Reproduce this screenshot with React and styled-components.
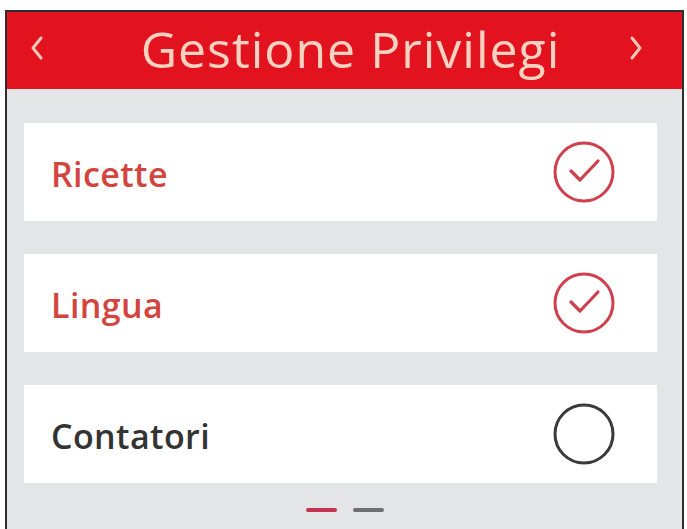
import styled, { createGlobalStyle } from 'styled-components'

const GlobalStyle = createGlobalStyle`
  html, body {
    margin: 0;
    padding: 0;
    background: #ffffff;
    overflow: hidden;
  }
  body {
    font-family: "Open Sans", "DejaVu Sans", sans-serif;
  }
`;

const Page = styled.div`
  width: 687px;
  height: 529px;
  padding: 10px 3px 0 5px;
  box-sizing: border-box;
  overflow: hidden;
`;

const Screen = styled.div`
  border: 2px solid #2e2e2e;
  border-bottom: 0;
  height: 540px;
  background: #e4e5e7;
  display: flex;
  flex-direction: column;
`;

const Header = styled.div`
  height: 77px;
  background: #e2121f;
  display: flex;
  align-items: center;
  justify-content: space-between;
  padding: 0 38px 0 22px;
`;

const Title = styled.h1`
  margin: 0;
  font-size: 50px;
  font-weight: 400;
  letter-spacing: 1px;
  color: #f7d2c0;
  line-height: 1;
  padding: 0 0 4px 28px;
`;

const Chevron = styled.span`
  display: flex;
  width: 16px;
  justify-content: center;
  margin-top: -6px;
`;

const List = styled.div`
  display: flex;
  flex-direction: column;
  gap: 33px;
  padding: 34px 25px 0 17px;
`;

const Row = styled.div`
  height: 98px;
  background: #ffffff;
  display: flex;
  align-items: center;
  justify-content: space-between;
  padding: 0 41px 0 27px;
`;

const Label = styled.span`
  font-size: 34px;
  font-weight: 600;
  letter-spacing: 0.4px;
  color: ${p => (p.$on ? '#d3443f' : '#333333')};
  padding-top: 4px;
`;

const Dots = styled.div`
  display: flex;
  justify-content: center;
  gap: 16px;
  padding: 25px 0 0 0;
`;

const Dash = styled.span`
  width: 31px;
  height: 4px;
  border-radius: 2px;
  background: ${p => (p.$active ? '#c4334f' : '#6f7072')};
`;

const ChevronIcon = ({ dir }) => (
  <svg width="16" height="26" viewBox="0 0 16 26">
    <path
      d={dir === 'left' ? 'M12 3 L4 13 L12 23' : 'M4 3 L12 13 L4 23'}
      fill="none"
      stroke="#f4c9b6"
      strokeWidth="3"
      strokeLinecap="round"
      strokeLinejoin="round"
    />
  </svg>
);

const Check = ({ on }) => (
  <svg width="64" height="64" viewBox="0 0 64 64">
    <circle cx="32" cy="32" r="29" fill="none" stroke={on ? '#cf3f4c' : '#3a3a3a'} strokeWidth="3" />
    {on && (
      <path d="M19 31 L28 40 L46 21" fill="none" stroke="#cf3f4c" strokeWidth="3.2" strokeLinecap="round" strokeLinejoin="round" />
    )}
  </svg>
);

const items = [
  { name: 'Ricette', on: true },
  { name: 'Lingua', on: true },
  { name: 'Contatori', on: false },
];

const App = () => {
  return (
    <Page>
      <GlobalStyle />
      <Screen>
        <Header>
          <Chevron><ChevronIcon dir="left" /></Chevron>
          <Title>Gestione Privilegi</Title>
          <Chevron><ChevronIcon dir="right" /></Chevron>
        </Header>
        <List>
          {items.map(it => (
            <Row key={it.name}>
              <Label $on={it.on}>{it.name}</Label>
              <Check on={it.on} />
            </Row>
          ))}
        </List>
        <Dots>
          <Dash $active />
          <Dash />
        </Dots>
      </Screen>
    </Page>
  )
}
export default App
